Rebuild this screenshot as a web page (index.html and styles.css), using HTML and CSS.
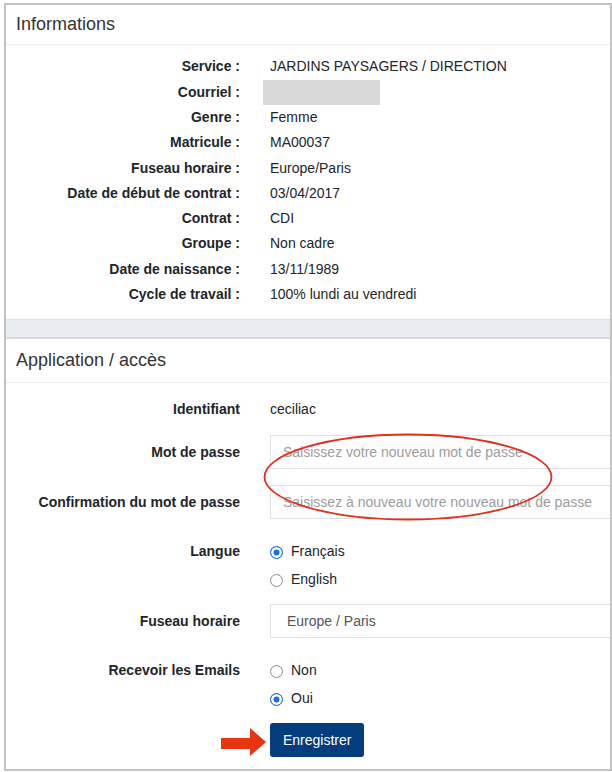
FILE: index.html
```html
<!DOCTYPE html>
<html lang="fr">
<head>
<meta charset="utf-8">
<title>Profil</title>
<link rel="stylesheet" href="styles.css">
</head>
<body>
<div class="frame">
  <section class="panel">
    <div class="panel-head">Informations</div>
    <dl class="info">
      <dt>Service :</dt><dd>JARDINS PAYSAGERS / DIRECTION</dd>
      <dt>Courriel :</dt><dd><span class="masked"></span></dd>
      <dt>Genre :</dt><dd>Femme</dd>
      <dt>Matricule :</dt><dd>MA00037</dd>
      <dt>Fuseau horaire :</dt><dd>Europe/Paris</dd>
      <dt>Date de début de contrat :</dt><dd>03/04/2017</dd>
      <dt>Contrat :</dt><dd>CDI</dd>
      <dt>Groupe :</dt><dd>Non cadre</dd>
      <dt>Date de naissance :</dt><dd>13/11/1989</dd>
      <dt>Cycle de travail :</dt><dd>100% lundi au vendredi</dd>
    </dl>
  </section>
  <div class="band"></div>
  <section class="panel app">
    <div class="panel-head head-app">Application / accès</div>
    <form class="form">
      <div class="row row-id">
        <label class="lbl lbl-28">Identifiant</label>
        <div class="ctl text-28">ceciliac</div>
      </div>
      <div class="row row-input">
        <label class="lbl lbl-34">Mot de passe</label>
        <div class="ctl"><input class="field" type="password" placeholder="Saisissez votre nouveau mot de passe"></div>
      </div>
      <div class="row row-input-last">
        <label class="lbl lbl-34">Confirmation du mot de passe</label>
        <div class="ctl"><input class="field" type="password" placeholder="Saisissez à nouveau votre nouveau mot de passe"></div>
      </div>
      <div class="row row-radio">
        <label class="lbl lbl-28">Langue</label>
        <div class="ctl">
          <div class="opt"><span class="radio checked"></span><span>Français</span></div>
          <div class="opt"><span class="radio"></span><span>English</span></div>
        </div>
      </div>
      <div class="row row-select">
        <label class="lbl lbl-34">Fuseau horaire</label>
        <div class="ctl"><div class="field select">Europe / Paris</div></div>
      </div>
      <div class="row row-radio2">
        <label class="lbl lbl-28">Recevoir les Emails</label>
        <div class="ctl">
          <div class="opt"><span class="radio"></span><span>Non</span></div>
          <div class="opt"><span class="radio checked"></span><span>Oui</span></div>
        </div>
      </div>
      <div class="row">
        <span></span>
        <div class="ctl">
          <div class="btn-wrap">
            <svg class="arrow" width="45" height="28" viewBox="0 0 45 28"><polygon points="0,10 29,10 29,0 45,14 29,28 29,21 0,21" fill="#e8350f"/></svg>
            <button type="button" class="btn">Enregistrer</button>
          </div>
        </div>
      </div>
    </form>
    <svg class="ellipse" width="292" height="90" viewBox="0 0 292 90"><ellipse cx="146" cy="45" rx="143.5" ry="42.5" fill="none" stroke="#e0301e" stroke-width="1.8"/></svg>
  </section>
</div>
</body>
</html>
```
FILE: styles.css
```css
* { box-sizing: border-box; }
html, body { margin: 0; padding: 0; background: #fff; }
body {
  font-family: "Liberation Sans", Arial, sans-serif;
  font-size: 14px;
  color: #212529;
}
.frame {
  margin: 3px 0 0 4px;
  width: 608px;
  height: 768px;
  border: 2px solid #c3c3c3;
  overflow: hidden;
  background: #fff;
}
.panel { position: relative; }
.panel-head {
  height: 40px;
  display: flex;
  align-items: center;
  padding-left: 10px;
  font-size: 18px;
  color: #333;
  border-bottom: 1px solid #eeeeee;
}
.head-app { height: 44px; }
.info {
  margin: 0;
  display: grid;
  grid-template-columns: 234px 1fr;
  column-gap: 30px;
  line-height: 25.3px;
  padding: 9.4px 0 11.6px;
}
.info dt { font-weight: bold; text-align: right; margin: 0; }
.info dd { margin: 0; }
.masked {
  display: block;
  width: 117px;
  height: 25px;
  margin-left: -7px;
  background: #d9d9d9;
}
.band {
  height: 20px;
  background: #e9ecf0;
  border-top: 1px solid #dde1e6;
  border-bottom: 2px solid #d5d9de;
}
.form { padding-top: 12px; }
.row {
  display: grid;
  grid-template-columns: 234px 1fr;
  column-gap: 30px;
  align-items: start;
}
.row-id { margin-bottom: 12px; }
.row-input { margin-bottom: 16px; }
.row-input-last { margin-bottom: 18px; }
.row-radio { margin-bottom: 11px; }
.row-select { margin-bottom: 18px; }
.row-radio2 { margin-bottom: 11px; }
.lbl { font-weight: bold; text-align: right; }
.lbl-28 { line-height: 28px; }
.lbl-34 { line-height: 34px; }
.text-28 { line-height: 28px; }
.field {
  display: block;
  width: 360px;
  height: 34px;
  border: 1px solid #dde1e8;
  border-radius: 0;
  padding: 0 12px;
  font-family: "Liberation Sans", Arial, sans-serif;
  font-size: 14px;
  color: #555;
  background: #fff;
  outline: none;
}
.field::placeholder { color: #9c9c9c; }
.select {
  display: flex;
  align-items: center;
  padding-left: 16px;
  color: #555;
}
.opt {
  display: flex;
  align-items: center;
  height: 28px;
  gap: 8px;
}
.radio {
  width: 13px;
  height: 13px;
  border-radius: 50%;
  border: 1.5px solid #8a8a8a;
  background: #fff;
  margin-top: 3px;
  flex: none;
}
.radio.checked {
  border-color: #1b6fe0;
  background: #1b6fe0;
  box-shadow: inset 0 0 0 2.5px #fff;
}
.btn-wrap { position: relative; display: inline-block; }
.arrow {
  position: absolute;
  right: calc(100% + 4px);
  top: 5px;
  display: block;
}
.btn {
  display: block;
  height: 34px;
  padding: 0 13px;
  border: none;
  border-radius: 3px;
  background: #033d7e;
  color: #fff;
  font-family: "Liberation Sans", Arial, sans-serif;
  font-size: 14px;
}
.ellipse {
  position: absolute;
  left: 256px;
  top: 93px;
  pointer-events: none;
}
```
